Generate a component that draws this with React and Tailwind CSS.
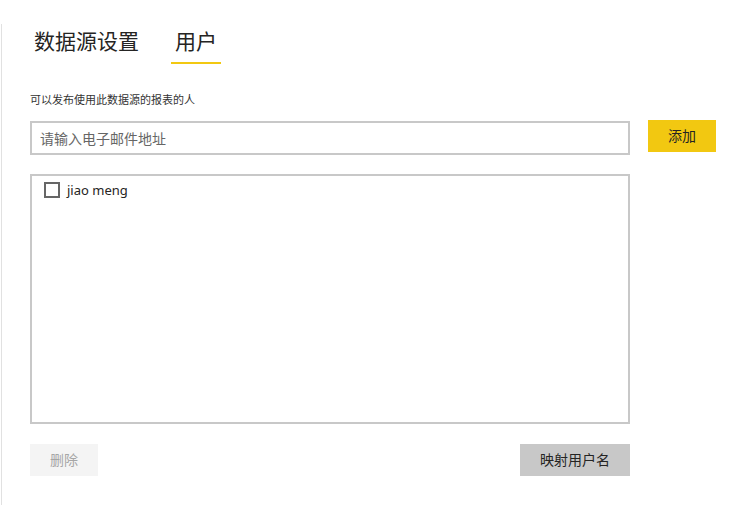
import React, { useState } from 'react';

const font = { fontFamily: '"Noto Sans", "Noto Sans CJK SC", sans-serif' };

const App = () => {
  const [email, setEmail] = useState('');
  const [checked, setChecked] = useState(false);

  return (
    <div className="w-[752px] h-[505px] bg-white pt-6" style={font}>
      <div className="ml-px h-[481px] border-l border-[#e1e1e1] pl-[28px] text-[#333]">
        {/* Tabs */}
        <div className="flex gap-[28px]">
          <div className="px-1 pt-[3px] pb-[7px] border-b-2 border-transparent text-[21px] leading-[28px] text-[#252423]">
            数据源设置
          </div>
          <div className="px-1 pt-[3px] pb-[7px] border-b-2 border-[#f2c811] text-[21px] leading-[28px] text-[#252423]">
            用户
          </div>
        </div>

        <p className="mt-[28px] text-[11px] leading-4 text-[#333]">可以发布使用此数据源的报表的人</p>

        {/* Email input */}
        <div className="mt-[13px] flex items-start">
          <input
            value={email}
            onChange={(e) => setEmail(e.target.value)}
            placeholder="请输入电子邮件地址"
            className="w-[600px] h-[34px] border-2 border-[#c8c8c8] px-2 text-sm outline-none placeholder:text-[#666]"
          />
          <button className="ml-[18px] -mt-px w-[68px] h-8 bg-[#f2c811] text-sm text-[#252423]">添加</button>
        </div>

        {/* User list */}
        <div className="mt-[19px] w-[600px] h-[250px] border-2 border-[#c8c8c8] px-3 pt-[6px]">
          <label className="flex items-center gap-[7px] cursor-pointer">
            <span
              onClick={() => setChecked(!checked)}
              className="w-4 h-4 border-2 border-[#666] flex items-center justify-center"
            >
              {checked && <span className="w-2 h-2 bg-[#666]" />}
            </span>
            <span className="text-[13px] leading-4 text-[#252423]">jiao meng</span>
          </label>
        </div>

        {/* Actions */}
        <div className="mt-5 w-[600px] flex justify-between">
          <button className="w-[68px] h-8 bg-[#f4f4f4] text-sm text-[#a6a6a6]">删除</button>
          <button className="w-[110px] h-8 bg-[#c8c8c8] text-sm text-[#252423]">映射用户名</button>
        </div>
      </div>
    </div>
  );
};

export default App;
